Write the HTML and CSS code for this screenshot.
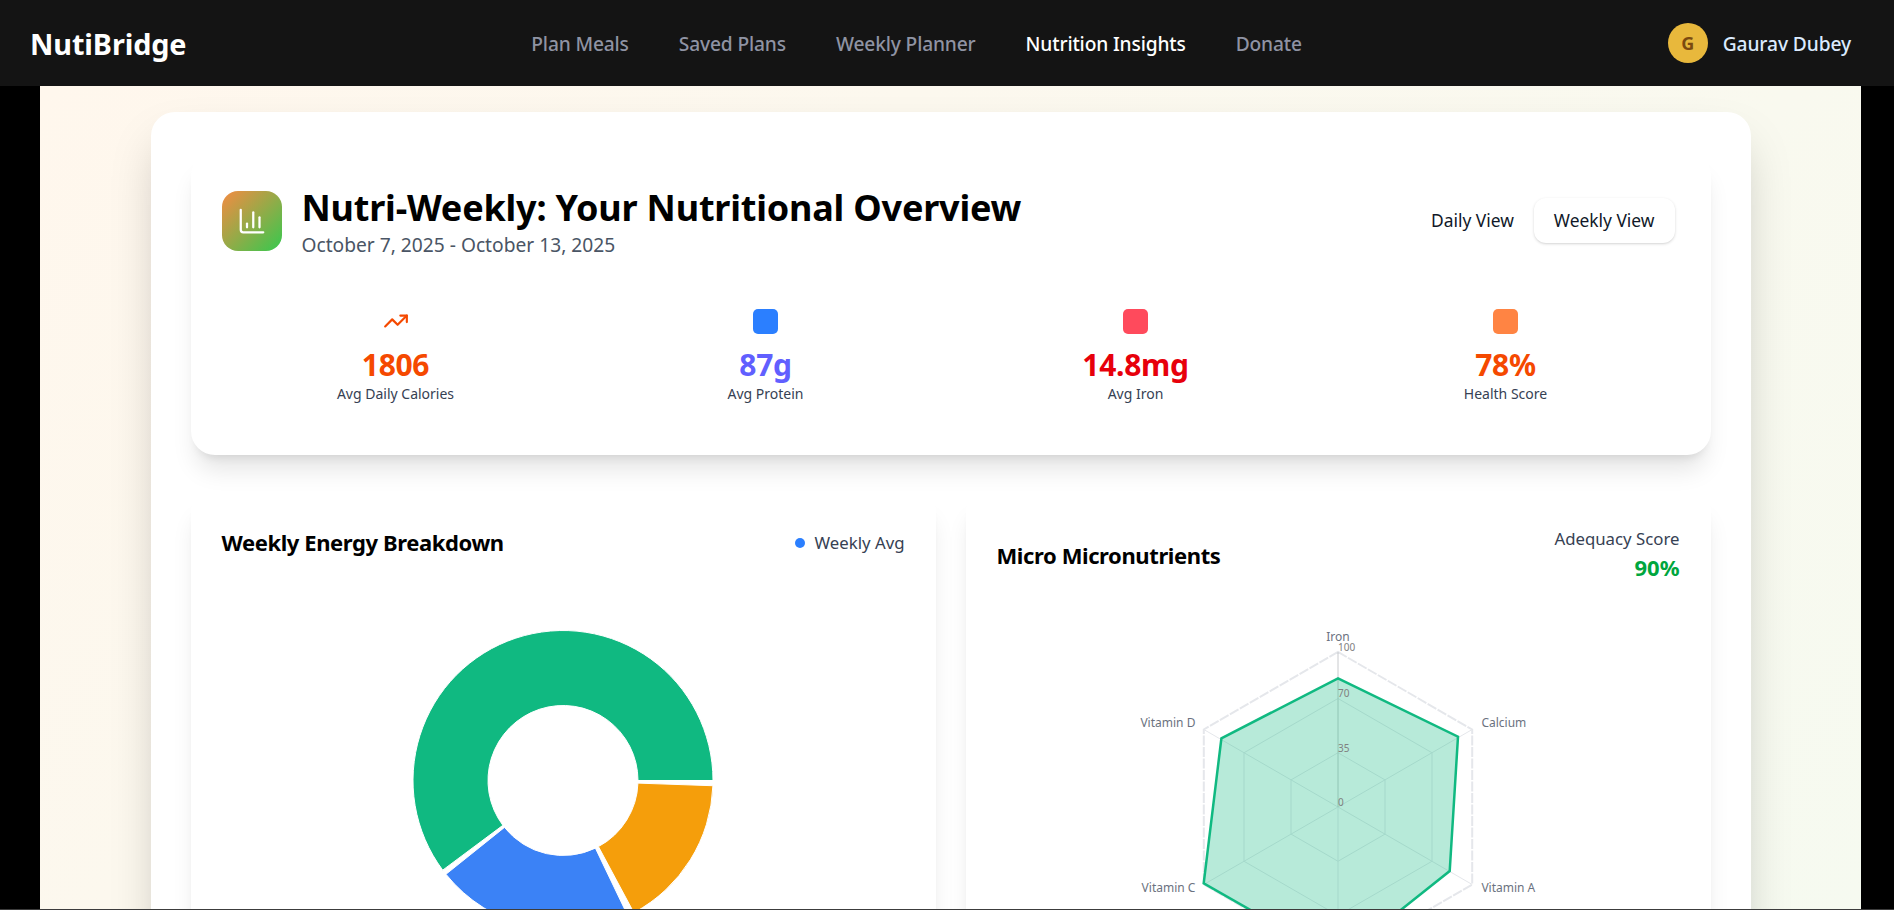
FILE: index.html
```html
<!DOCTYPE html>
<html lang="en">
<head>
    <meta charset="UTF-8">
    <meta name="viewport" content="width=device-width, initial-scale=1.0">
    <title>NutiBridge - Nutrition Insights</title>
    <link rel="stylesheet" href="styles.css">
</head>
<body>
    <nav class="navbar">
        <div class="brand">NutiBridge</div>
        <div class="nav-links">
            <a href="#">Plan Meals</a>
            <a href="#">Saved Plans</a>
            <a href="#">Weekly Planner</a>
            <a href="#" class="active">Nutrition Insights</a>
            <a href="#">Donate</a>
        </div>
        <div class="user">
            <span class="avatar">G</span>
            <span class="user-name">Gaurav Dubey</span>
        </div>
    </nav>

    <div class="page">
        <main class="background">
            <div class="panel">
                <section class="overview card">
                    <div class="overview-head">
                        <div class="heading">
                            <div class="logo">
                                <svg width="30" height="30" viewBox="0 0 24 24" fill="none" stroke="#fff" stroke-width="1.8" stroke-linecap="round" stroke-linejoin="round">
                                    <path d="M3 3v16a2 2 0 0 0 2 2h16"/>
                                    <path d="M8 17v-3"/>
                                    <path d="M13 17V5"/>
                                    <path d="M18 17V9"/>
                                </svg>
                            </div>
                            <div>
                                <h1>Nutri-Weekly: Your Nutritional Overview</h1>
                                <p class="dates">October 7, 2025 - October 13, 2025</p>
                            </div>
                        </div>
                        <div class="toggle">
                            <button>Daily View</button>
                            <button class="selected">Weekly View</button>
                        </div>
                    </div>

                    <div class="stats">
                        <div class="stat">
                            <svg class="stat-icon trend" width="26" height="26" viewBox="0 0 24 24" fill="none" stroke="#f54900" stroke-width="2" stroke-linecap="round" stroke-linejoin="round">
                                <polyline points="22 7 13.5 15.5 8.5 10.5 2 17"/>
                                <polyline points="16 7 22 7 22 13"/>
                            </svg>
                            <div class="stat-value orange">1806</div>
                            <div class="stat-label">Avg Daily Calories</div>
                        </div>
                        <div class="stat">
                            <span class="stat-icon square blue-bg"></span>
                            <div class="stat-value indigo">87g</div>
                            <div class="stat-label">Avg Protein</div>
                        </div>
                        <div class="stat">
                            <span class="stat-icon square red-bg"></span>
                            <div class="stat-value red">14.8mg</div>
                            <div class="stat-label">Avg Iron</div>
                        </div>
                        <div class="stat">
                            <span class="stat-icon square orange-bg"></span>
                            <div class="stat-value orange">78%</div>
                            <div class="stat-label">Health Score</div>
                        </div>
                    </div>
                </section>

                <div class="charts">
                    <section class="chart-card card">
                        <div class="chart-head top">
                            <h2>Weekly Energy Breakdown</h2>
                            <div class="legend"><span class="dot"></span>Weekly Avg</div>
                        </div>
                        <div class="chart-box">
                            <svg width="400" height="400" viewBox="-200 -180.5 400 400">
                                <g stroke="#fff" stroke-width="1">
                                    <path fill="#10b981" d="M150 0A150 150 0 1 0 -120.27 89.64L-60.13 44.82A75 75 0 1 1 75 0Z"/>
                                    <path fill="#3b82f6" d="M-117.06 93.78A150 150 0 0 0 64.8 135.27L32.4 67.64A75 75 0 0 1 -58.53 46.89Z"/>
                                    <path fill="#f59e0b" d="M70.89 132.2A150 150 0 0 0 149.91 5.23L74.95 2.62A75 75 0 0 1 35.44 66.1Z"/>
                                </g>
                            </svg>
                        </div>
                    </section>

                    <section class="chart-card card">
                        <div class="chart-head">
                            <h2>Micro Micronutrients</h2>
                            <div class="score">
                                <div class="score-label">Adequacy Score</div>
                                <div class="score-value">90%</div>
                            </div>
                        </div>
                        <div class="chart-box">
                            <svg width="400" height="400" viewBox="-200 -207 400 400">
                                <g fill="none" stroke="#e5e7eb">
                                    <polygon points="0,-155 134.2,-77.5 134.2,77.5 0,155 -134.2,77.5 -134.2,-77.5" stroke-width="2" stroke-dasharray="10 1.5"/>
                                    <polygon points="0,-108.5 94,-54.25 94,54.25 0,108.5 -94,54.25 -94,-54.25"/>
                                    <polygon points="0,-54.25 47,-27.1 47,27.1 0,54.25 -47,27.1 -47,-27.1"/>
                                    <path d="M0 0V155M0 0L134.2 -77.5M0 0L134.2 77.5M0 0L-134.2 77.5M0 0L-134.2 -77.5"/>
                                    <path d="M0 0V-155" stroke="#c8cacd"/>
                                </g>
                                <polygon class="radar-area" points="0,-128.7 120,-70.3 111.7,64 0,153 -134.3,76.3 -116.6,-68.7"/>
                                <g class="axis-label">
                                    <text x="0" y="-166" text-anchor="middle">Iron</text>
                                    <text x="143.4" y="-80">Calcium</text>
                                    <text x="143.4" y="85">Vitamin A</text>
                                    <text x="-142.6" y="85" text-anchor="end">Vitamin C</text>
                                    <text x="-142.6" y="-80" text-anchor="end">Vitamin D</text>
                                </g>
                                <g class="tick-label">
                                    <text x="0" y="-156">100</text>
                                    <text x="0" y="-110">70</text>
                                    <text x="0" y="-55.5">35</text>
                                    <text x="0" y="-1.5">0</text>
                                </g>
                            </svg>
                        </div>
                    </section>
                </div>
            </div>
        </main>
    </div>
    <div class="bottom-line"></div>
</body>
</html>
```

FILE: styles.css
```css
* {
    box-sizing: border-box;
}

body {
    font-family: 'Noto Sans', 'Open Sans', sans-serif;
    background: #000;
    color: #000;
    margin: 0;
    height: 100vh;
    display: flex;
    flex-direction: column;
    overflow: hidden;
}

/* Top bar */
.navbar {
    flex: none;
    height: 86px;
    background: #141414;
    display: flex;
    align-items: center;
    justify-content: space-between;
    padding: 0 30px;
}

.brand {
    color: #fff;
    font-size: 28.8px;
    font-weight: 700;
    letter-spacing: -0.1px;
}

.nav-links {
    display: flex;
    gap: 50px;
    margin-right: 21px;
}

.nav-links a {
    color: #8f93a3;
    font-size: 19.2px;
    font-weight: 500;
    text-decoration: none;
    letter-spacing: -0.15px;
}

.nav-links a.active {
    color: #fff;
}

.user {
    display: flex;
    align-items: center;
    gap: 15px;
    padding-right: 13px;
}

.avatar {
    width: 40px;
    height: 40px;
    border-radius: 50%;
    background: #e8b83c;
    color: #7b4a10;
    font-size: 18px;
    font-weight: 700;
    display: flex;
    align-items: center;
    justify-content: center;
}

.user-name {
    color: #dbeafe;
    font-size: 19.2px;
    font-weight: 500;
    letter-spacing: -0.1px;
}

/* Page area */
.page {
    flex: 1;
    min-height: 0;
    padding: 0 33px 0 40px;
}

.background {
    height: 100%;
    overflow: hidden;
    padding-top: 26px;
    background: linear-gradient(135deg, #fff7ed, #f6faf0);
}

.panel {
    width: 1600px;
    margin: 0 auto;
    padding: 40px;
    min-height: 1000px;
    background: #fff;
    border-radius: 24px;
    box-shadow: 0 25px 50px -12px rgba(0, 0, 0, 0.25);
}

.card {
    background: #fff;
    box-shadow: 0 20px 25px -5px rgba(0, 0, 0, 0.1), 0 8px 10px -6px rgba(0, 0, 0, 0.1);
}

/* Overview card */
.overview {
    height: 303px;
    border-radius: 24px;
    padding: 35px 32px 0 31px;
}

.overview-head {
    display: flex;
    align-items: center;
    justify-content: space-between;
}

.heading {
    display: flex;
    align-items: center;
    gap: 20px;
}

.logo {
    width: 60px;
    height: 60px;
    border-radius: 16px;
    background: linear-gradient(135deg, #f58b42, #35c94e);
    display: flex;
    align-items: center;
    justify-content: center;
}

h1 {
    margin: 0;
    font-size: 36px;
    line-height: 40px;
    padding-top: 1px;
    font-weight: 700;
    letter-spacing: -0.2px;
}

.dates {
    margin: 3px 0 -4px;
    font-size: 19.2px;
    line-height: 28px;
    color: #4a5565;
}

.toggle {
    display: flex;
    padding: 4px;
    margin-bottom: 2px;
}

.toggle button {
    font-family: inherit;
    font-size: 17.4px;
    line-height: 24px;
    padding: 10px 20px;
    height: 45px;
    border: none;
    border-radius: 12px;
    background: transparent;
    color: #101828;
}

.toggle button.selected {
    background: #fff;
    box-shadow: 0 1px 3px rgba(0, 0, 0, 0.15), 0 1px 2px -1px rgba(0, 0, 0, 0.1);
}

.stats {
    display: grid;
    grid-template-columns: repeat(4, 1fr);
    gap: 24px;
    margin: 54px 0 0 1px;
}

.stat {
    display: flex;
    flex-direction: column;
    align-items: center;
}

.stat-icon {
    display: block;
    height: 26px;
}

.trend {
    margin-top: -1px;
    margin-bottom: 1px;
}

.square {
    width: 25px;
    height: 25px;
    border-radius: 5px;
    margin-bottom: 1px;
}

.blue-bg {
    background: #2b7fff;
}

.red-bg {
    background: #ff4a5c;
}

.orange-bg {
    background: #ff8443;
}

.stat-value {
    margin-top: 12px;
    font-size: 30px;
    line-height: 36px;
    font-weight: 700;
    letter-spacing: -0.3px;
}

.orange {
    color: #f54900;
}

.indigo {
    color: #615fff;
}

.red {
    color: #e7000b;
}

.stat-label {
    margin-top: 1px;
    font-size: 14px;
    line-height: 20px;
    color: #364153;
}

/* Chart cards */
.charts {
    display: grid;
    grid-template-columns: 1fr 1fr;
    gap: 30px;
    margin-top: 40px;
}

.chart-card {
    height: 500px;
    border-radius: 16px;
    padding: 32px 31px;
}

.chart-head {
    height: 56px;
    display: flex;
    align-items: center;
    justify-content: space-between;
}

.chart-head.top {
    align-items: flex-start;
}

.chart-head.top h2 {
    margin-top: -2px;
}

h2 {
    margin: 0;
    font-size: 22px;
    line-height: 34px;
    font-weight: 700;
    letter-spacing: -0.4px;
}

.legend {
    display: flex;
    align-items: center;
    gap: 10px;
    font-size: 16.8px;
    line-height: 34px;
    margin-top: -1px;
    color: #364153;
}

.dot {
    width: 10px;
    height: 10px;
    border-radius: 50%;
    background: #2b7fff;
}

.score {
    text-align: right;
}

.score-label {
    font-size: 16.8px;
    line-height: 24px;
    color: #364153;
}

.score-value {
    margin-top: 2px;
    margin-bottom: 2px;
    font-size: 22px;
    line-height: 28px;
    font-weight: 700;
    color: #00a63e;
}

.chart-box {
    display: flex;
    justify-content: center;
    margin-top: 17px;
}

.radar-area {
    fill: #10b981;
    fill-opacity: 0.3;
    stroke: #10b981;
    stroke-width: 2.5;
}

.axis-label text {
    font-size: 12px;
    fill: #6b7280;
}

.tick-label text {
    font-size: 10px;
    fill: #808080;
}

.bottom-line {
    flex: none;
    height: 1px;
    background: #3c3c3c;
}
```
